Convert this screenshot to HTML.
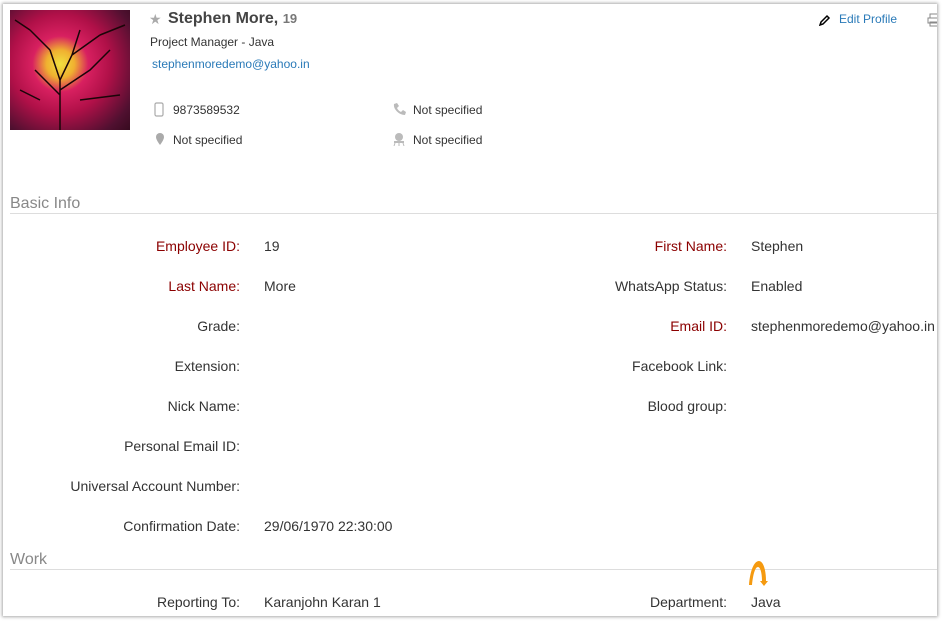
<!DOCTYPE html>
<html><head><meta charset="utf-8"><style>
body{margin:0;width:942px;height:622px;background:#fff;font-family:"Liberation Sans",Arial,sans-serif;overflow:hidden;position:relative}
.panel{position:absolute;left:3px;top:4px;width:934px;height:612px;background:#fff;box-shadow:0 0 3px 1px #aaa;overflow:hidden}
.a{position:absolute;white-space:nowrap}
.l{position:absolute;text-align:right;font-size:14px;color:#333;white-space:nowrap}
.v{position:absolute;font-size:14px;color:#333;white-space:nowrap}
.red{color:#8b0000}
.sec{position:absolute;left:7px;font-size:16px;color:#888}
.line{position:absolute;left:7px;right:0;height:1px;background:#ddd}
.sm{font-size:12px;color:#333}
</style></head><body>
<div class="panel">
<div class="a" style="left:7px;top:6px;width:120px;height:120px;background:radial-gradient(circle at 42% 45%,#f0e040 0,#f0b030 14px,#d82060 28px,#b01048 50px,#501030 80px,#200510 110px)"></div>
<svg class="a" style="left:7px;top:6px" width="120" height="120"><g stroke="#1a0508" stroke-width="1.5" fill="none"><path d="M50 120 L50 70 L40 40 M50 70 L62 45 L70 20 M50 85 L25 60 M50 80 L80 60 L100 40 M40 40 L20 20 M62 45 L90 25 M30 90 L10 80 M70 90 L110 85 M20 20 L5 10 M90 25 L115 15"/></g></svg>
<div class="a" style="left:146px;top:7px;color:#aaa;font-size:14px">★</div>
<div class="a" style="left:165px;top:6px;font-size:16px;font-weight:bold;color:#444">Stephen More, <span style="font-size:13px;color:#777">19</span></div>
<div class="a sm" style="left:147px;top:31px">Project Manager - Java</div>
<div class="a" style="left:149px;top:53px;font-size:12px;color:#2a7ab8">stephenmoredemo@yahoo.in</div>
<svg class="a" style="left:151px;top:98px" width="10" height="15"><rect x="1" y="1" width="8" height="13" rx="1.5" fill="none" stroke="#aaa" stroke-width="1.2"/></svg>
<div class="a sm" style="left:170px;top:99px">9873589532</div>
<svg class="a" style="left:152px;top:128px" width="10" height="14"><path d="M5 1a4 4 0 0 1 4 4c0 3-4 8-4 8S1 8 1 5a4 4 0 0 1 4-4z" fill="#aaa"/></svg>
<div class="a sm" style="left:170px;top:129px">Not specified</div>
<svg class="a" style="left:389px;top:98px" width="14" height="14"><path d="M2 2l3-1 2 3-2 2c1 2 2 3 4 4l2-2 3 2-1 3C7 13 1 7 2 2z" fill="#bbb"/></svg>
<div class="a sm" style="left:410px;top:99px">Not specified</div>
<svg class="a" style="left:389px;top:128px" width="14" height="14"><circle cx="7" cy="5" r="4" fill="#bbb"/><rect x="2" y="9" width="10" height="2" fill="#bbb"/><path d="M3 11l-1 3M11 11l1 3M7 11v3" stroke="#bbb"/></svg>
<div class="a sm" style="left:410px;top:129px">Not specified</div>
<svg class="a" style="left:816px;top:10px" width="12" height="12"><path d="M1 11l1-3 6-6 2 2-6 6z" fill="none" stroke="#000" stroke-width="1.5"/></svg>
<div class="a" style="left:836px;top:8px;font-size:12px;color:#2a7ab8">Edit Profile</div>
<svg class="a" style="left:924px;top:9px" width="12" height="14"><rect x="3" y="1" width="9" height="4" fill="none" stroke="#888"/><rect x="1" y="5" width="11" height="5" fill="none" stroke="#888"/><rect x="3" y="9" width="9" height="4" fill="none" stroke="#888"/></svg>

<div class="sec" style="top:191px">Basic Info</div>
<div class="line" style="top:209px"></div>

<div class="l red" style="right:697px;top:234px">Employee ID:</div><div class="v" style="left:261px;top:234px">19</div>
<div class="l red" style="right:210px;top:234px">First Name:</div><div class="v" style="left:748px;top:234px">Stephen</div>
<div class="l red" style="right:697px;top:274px">Last Name:</div><div class="v" style="left:261px;top:274px">More</div>
<div class="l" style="right:210px;top:274px">WhatsApp Status:</div><div class="v" style="left:748px;top:274px">Enabled</div>
<div class="l" style="right:697px;top:314px">Grade:</div>
<div class="l red" style="right:210px;top:314px">Email ID:</div><div class="v" style="left:748px;top:314px">stephenmoredemo@yahoo.in</div>
<div class="l" style="right:697px;top:354px">Extension:</div>
<div class="l" style="right:210px;top:354px">Facebook Link:</div>
<div class="l" style="right:697px;top:394px">Nick Name:</div>
<div class="l" style="right:210px;top:394px">Blood group:</div>
<div class="l" style="right:697px;top:434px">Personal Email ID:</div>
<div class="l" style="right:697px;top:474px">Universal Account Number:</div>
<div class="l" style="right:697px;top:514px">Confirmation Date:</div><div class="v" style="left:261px;top:514px">29/06/1970 22:30:00</div>

<div class="sec" style="top:547px">Work</div>
<div class="line" style="top:565px"></div>
<svg class="a" style="left:744px;top:553px" width="22" height="30"><path d="M2 28C3 14 7 4 12 4c4 0 7 8 7 20l2 0-4 5-4-5 2 0c0-9-2-14-4-14-3 0-5 8-6 18z" fill="#f59a10"/></svg>
<div class="l" style="right:697px;top:590px">Reporting To:</div><div class="v" style="left:261px;top:590px">Karanjohn Karan 1</div>
<div class="l" style="right:210px;top:590px">Department:</div><div class="v" style="left:748px;top:590px">Java</div>
</div>
</body></html>
